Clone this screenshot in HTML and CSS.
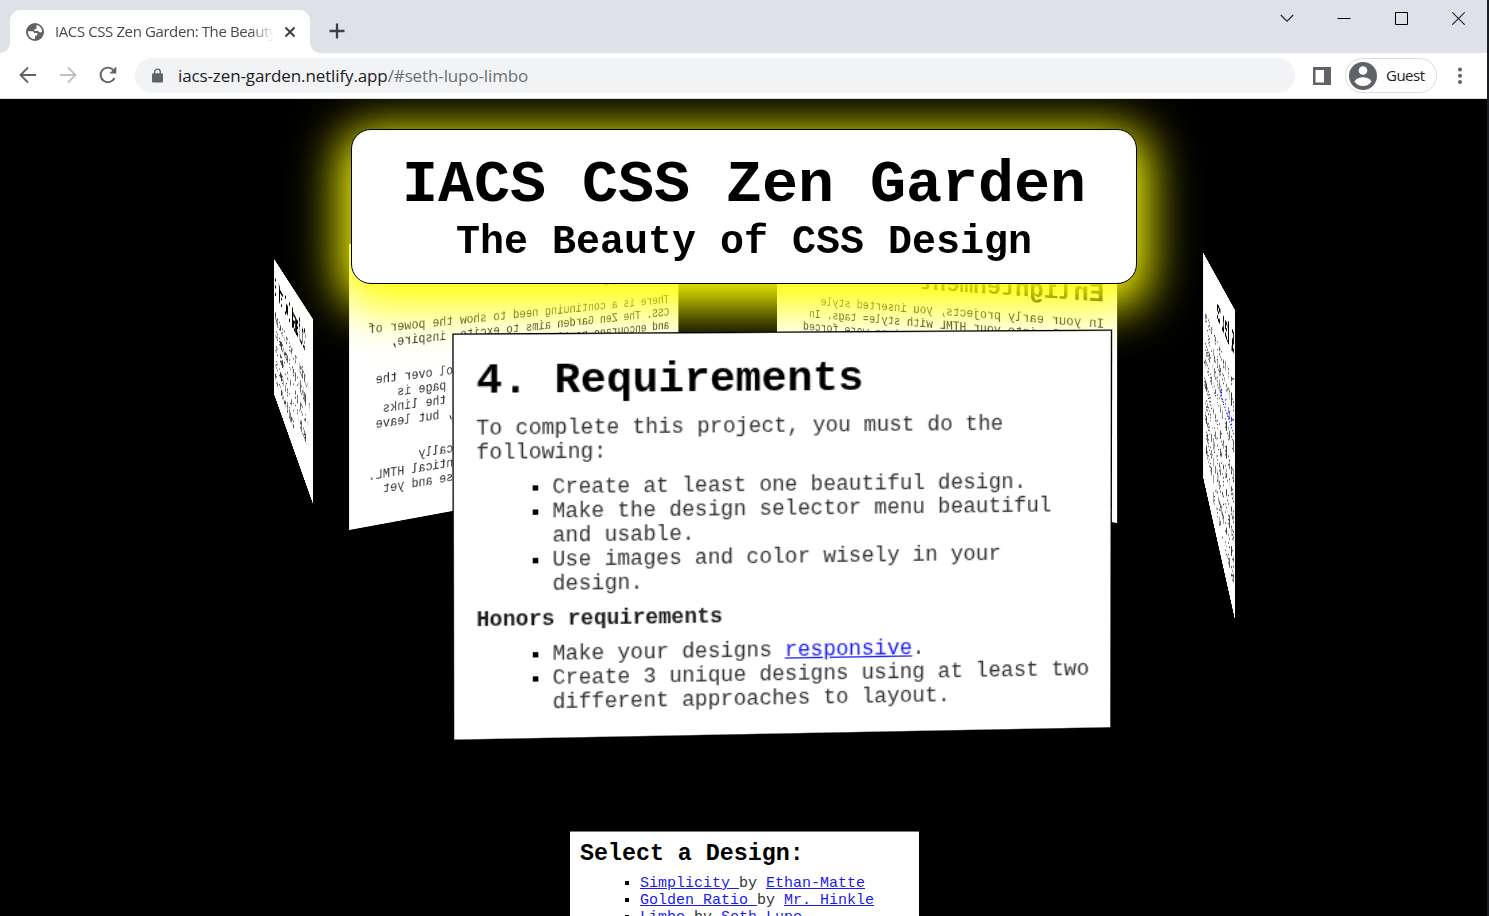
FILE: index.html
```html
<!DOCTYPE html>
<html lang="en">
<head>
<meta charset="utf-8">
<title>IACS CSS Zen Garden: The Beauty of CSS Design</title>
<link rel="stylesheet" href="styles.css">
</head>
<body>
<div class="window">
  <div class="tabstrip">
    <div class="tab">
      <svg class="globe" viewBox="0 0 18 18" width="18" height="18"><circle cx="9" cy="9" r="9" fill="#5f6368"/><path fill="#fff" d="M2 8.200h3.600c1.600 0 2.300.7 2.500 1.700l2.400.2c.9.200 1.200.8 1 1.500-.2.800-.9 1-1.700 1.100l-.8.400v2.900C5.300 16.200 1.600 13 2 8.200zM10.500 2.100c3.300.5 5.400 3.200 5.600 6.300-.9.700-1.500 1.200-2.500.9-.8-.3-.9-1-1.800-1.200l-2.900-.2c-.9-.3-.8-1.300-.1-1.700l1.700-.7z"/></svg>
      <span class="tab-title">IACS CSS Zen Garden: The Beauty of CSS</span>
      <svg class="tab-close" viewBox="0 0 12 12" width="12" height="12"><path d="M1.500 1.500l9 9M10.500 1.500l-9 9" stroke="#3c4043" stroke-width="2" fill="none"/></svg>
    </div>
    <svg class="plus" viewBox="0 0 16 16" width="16" height="16"><path d="M8 .5v15M.5 8h15" stroke="#3c4043" stroke-width="2.300"/></svg>
    <div class="controls">
      <svg width="14" height="14" viewBox="0 0 14 14"><path d="M.8 4l6.200 6.200L13.200 4" fill="none" stroke="#222" stroke-width="1.100"/></svg>
      <svg width="14" height="14" viewBox="0 0 14 14"><path d="M.5 7.500h13" stroke="#000"/></svg>
      <svg width="14" height="14" viewBox="0 0 14 14"><path d="M1.500 1.500h12v12h-12z" fill="none" stroke="#000"/></svg>
      <svg width="14" height="14" viewBox="0 0 14 14"><path d="M1.300 1.300l12.400 12.400M13.700 1.300L1.300 13.700" stroke="#222" stroke-width="1.100"/></svg>
    </div>
  </div>
  <div class="toolbar">
    <svg class="nav" width="18" height="18" viewBox="0 0 18 18"><path d="M17 9H2M9 1.500L1.500 9 9 16.500" fill="none" stroke="#5f6368" stroke-width="1.900"/></svg>
    <svg class="nav" width="18" height="18" viewBox="0 0 18 18"><path d="M1 9h15M9 1.500L16.500 9 9 16.500" fill="none" stroke="#bdc1c6" stroke-width="1.900"/></svg>
    <svg class="nav" width="18" height="18" viewBox="0 0 18 18"><path d="M15.500 12A7.300 7.300 0 1 1 14.300 4" fill="none" stroke="#5f6368" stroke-width="1.900"/><path d="M17.300.6v6.800h-6.800z" fill="#5f6368"/></svg>
    <div class="omnibox">
      <svg width="11" height="15" viewBox="0 0 11 15"><path d="M2.700 6V4a2.800 2.800 0 0 1 5.600 0v2" fill="none" stroke="#5f6368" stroke-width="1.300"/><rect y="5.200" width="11" height="9.300" rx="1.200" fill="#5f6368"/></svg>
      <span class="url">iacs-zen-garden.netlify.app<span class="path">/#seth-lupo-limbo</span></span>
    </div>
    <svg class="panel-icon" width="18" height="18" viewBox="0 0 18 18"><path fill="#5f6368" fill-rule="evenodd" d="M0 0h18v18H0zM2.500 3v12.500H11V3z"/></svg>
    <div class="profile">
      <svg width="28" height="28" viewBox="0 0 28 28"><circle cx="14" cy="14" r="14" fill="#5f6368"/><circle cx="14" cy="8.500" r="4.300" fill="#fff"/><path d="M5.500 19.500c1.500-3 5.200-4.300 8.500-4.300s7 1.300 8.500 4.300c-2 3-5.200 4.500-8.500 4.500s-6.500-1.500-8.500-4.500z" fill="#fff"/></svg>
      <span>Guest</span>
    </div>
    <svg class="dots" width="6" height="18" viewBox="0 0 6 18"><g fill="#5f6368"><circle cx="3" cy="2.500" r="2"/><circle cx="3" cy="8.700" r="2"/><circle cx="3" cy="15" r="2"/></g></svg>
  </div>

  <main class="stage">
    <section class="panel p168" data-quad="274 159 313.300 219.500 313.300 407 274 296">
      <h2>3. What Do I Benefit?</h2>
      <p>Why participate? For recognition, inspiration,<br>and a resource we can all refer to showing how<br>amazing CSS really can be. This project is both<br>inspiration and a learning tool for students<br>who wish to be web designers.</p>
    </section>
    <section class="panel p346 lowered" data-quad="679 123 348.400 144 348.400 432 679 371">
      <h2>2. So What is This<br>About?</h2>
      <p>There is a continuing need to show the power of<br>CSS. The Zen Garden aims to excite, inspire,<br>and encourage participation.</p>
      <p>Every designer will have full control over the<br>look of the design. All HTML on the page is<br>already written. You can still edit the links<br>within the menu to show your design, but leave<br>the rest alone.</p>
      <p>Designs should each look so dramatically<br>different. They would share the identical HTML.<br>Every page gets the same words to use and yet<br>looks unique.</p>
    </section>
    <section class="panel p346 lowered" data-quad="1118 138 776.300 124.500 776.300 368 1118 425">
      <h2>1. The Road to<br>Enlightenment</h2>
      <p>In your early projects, you inserted style<br>directly into your HTML with style= tags. In<br>later projects, your page designs were forced<br>to share a single style sheet.</p>
    </section>
    <section class="panel p270" data-quad="1235.300 210.500 1203 152.500 1203 379 1235.300 523.500">
      <h2>5. Resources</h2>
      <p>There are many sites to learn from, such as <a>W3</a><br>and others which explain layout in detail.<br><a>The Mozilla guides</a> have examples that are good<br>for beginners as well as experienced designers.</p>
      <p>Look at the original garden for ideas about the<br>use of images, type and color in each design.<br>Every page there was made with the same words.<br>Remember to give credit for any picture that<br>you did not create yourself in this project.<br>Ask questions if you need help.</p>
    </section>

    <header class="banner">
      <h1>IACS CSS Zen Garden</h1>
      <div class="subtitle">The Beauty of CSS Design</div>
    </header>

    <section class="panel p302" data-quad="452.300 234.500 1112.200 230.500 1111.500 629.500 452.800 642">
      <h2>4. Requirements</h2>
      <p>To complete this project, you must do the<br>following:</p>
      <ul>
        <li>Create at least one beautiful design.</li>
        <li>Make the design selector menu beautiful<br>and usable.</li>
        <li>Use images and color wisely in your<br>design.</li>
      </ul>
      <h3>Honors requirements</h3>
      <ul>
        <li>Make your designs <a>responsive</a>.</li>
        <li>Create 3 unique designs using at least two<br>different approaches to layout.</li>
      </ul>
    </section>

    <nav class="selector">
      <h3>Select a Design:</h3>
      <ul>
        <li><a>Simplicity </a>by <a>Ethan-Matte</a></li>
        <li><a>Golden Ratio </a>by <a>Mr. Hinkle</a></li>
        <li><a>Limbo </a>by <a>Seth Lupo</a></li>
      </ul>
    </nav>
  </main>
</div>
<div class="edge"></div>
<script src="carousel.js"></script>
</body>
</html>
```
FILE: styles.css
```css
* { box-sizing: border-box; }
body { margin: 0; width: 1489px; height: 916px; overflow: hidden; background: #000; font-family: "Open Sans", sans-serif; }
svg { display: block; flex: none; }
.window { display: flex; flex-direction: column; height: 916px; }

/* browser frame */
.tabstrip { height: 53px; flex: none; background: #dee1e6; display: flex; align-items: flex-start; padding-left: 10px; }
.tab { position: relative; width: 300px; height: 43px; margin-top: 10px; background: #fff; border-radius: 10px 10px 0 0; display: flex; align-items: center; padding: 0 14px 0 16px; }
.tab::before, .tab::after { content: ""; position: absolute; bottom: 0; width: 10px; height: 10px; }
.tab::before { left: -10px; background: radial-gradient(circle at 0 0, #dee1e6 9.5px, #fff 10px); }
.tab::after { right: -10px; background: radial-gradient(circle at 100% 0, #dee1e6 9.5px, #fff 10px); }
.tab-title { width: 220px; margin-left: 11px; padding-bottom: 2px; white-space: nowrap; overflow: hidden; font-size: 15px; letter-spacing: -0.4px; color: #45494d; -webkit-mask-image: linear-gradient(90deg, #000 195px, transparent 219px); mask-image: linear-gradient(90deg, #000 195px, transparent 219px); }
.tab-close { margin-left: 9px; }
.plus { margin: 23px 0 0 19px; }
.controls { margin-left: auto; padding: 11px 24px 0 0; display: flex; gap: 43px; }
.toolbar { height: 46px; flex: none; background: #fff; border-bottom: 1px solid #dadce0; display: flex; align-items: center; padding-left: 19px; }
.nav { margin: 0 22px 1px 0; }
.omnibox { width: 1160px; height: 35px; margin-left: -4px; border-radius: 18px; background: #f1f3f4; display: flex; align-items: center; padding-left: 17px; }
.url { margin-left: 15px; font-size: 17px; letter-spacing: -0.12px; color: #202124; }
.path { color: #6b6f74; }
.panel-icon { margin-left: 18px; }
.profile { width: 92px; height: 35px; margin-left: 14px; border: 1px solid #dadce0; border-radius: 18px; display: flex; align-items: center; padding-left: 3px; font-size: 15px; letter-spacing: -0.5px; color: #202124; }
.profile span { margin: 0 0 2px 9px; }
.dots { margin-left: 20px; }
.edge { position: absolute; right: 0; top: 0; width: 2px; height: 916px; background: #1a1d24; }

/* page */
.stage { position: relative; flex: 1; overflow: hidden; background: #000; font-family: "Courier New", "Liberation Mono", monospace; color: #000; }
.stage a { color: #1a1aee; text-decoration: underline; }
.stage p, .stage li { color: #333; }
.stage li::marker { color: #000; }
.stage ul { list-style: square; }

/* carousel faces, projected by carousel.js */
.panel { position: absolute; left: 0; top: 0; width: 494px; padding: 16px; border: 1px solid #000; background: #fff; transform-origin: 0 0; will-change: transform; font-size: 16px; line-height: 18px; white-space: nowrap; overflow: hidden; }
.p168 { height: 168px; }
.p270 { height: 270px; }
.p302 { height: 302px; padding: 17px 16.5px; }
.p346 { height: 346px; }
.panel h2 { margin: 0 0 8px; font-size: 32px; line-height: 36px; }
.lowered h2 { margin-bottom: 9px; }
.panel h3 { margin: 8px 0; font-size: 16px; line-height: 18px; color: #1c1c1c; }
.panel p { margin: 8px 0; }
.panel ul { margin: 8px 0 8px 16px; padding-left: 40px; }

.banner { position: relative; width: 786px; height: 155px; margin: 30px 0 0 351px; padding-top: 21px; border: 1px solid #000; border-radius: 20px; background: #fff; box-shadow: 0 12px 48px 12px #ff0; text-align: center; font-weight: bold; }
.banner h1 { margin: 0; font-size: 60px; line-height: 68px; }
.subtitle { font-size: 40px; line-height: 47px; }

.selector { position: absolute; left: 570px; top: 732px; width: 349px; height: 100px; padding: 8px 10px; background: #fff; border-top: 1px solid #777; font-size: 15px; line-height: 17px; }
.selector h3 { margin: 0; font-size: 23.3px; line-height: 28px; }
.selector ul { margin: 7px 0 0; padding-left: 60px; }
```
FILE: carousel.js
```js
// Projects each face onto its quad (top-left, top-right, bottom-right, bottom-left).
document.querySelectorAll('.panel').forEach(function (el) {
  var q = el.dataset.quad.split(' ').map(Number);
  var w = el.offsetWidth, h = el.offsetHeight;
  var x0 = q[0], y0 = q[1], x1 = q[2], y1 = q[3], x2 = q[4], y2 = q[5], x3 = q[6], y3 = q[7];
  var dx1 = x1 - x2, dx2 = x3 - x2, sx = x0 - x1 + x2 - x3;
  var dy1 = y1 - y2, dy2 = y3 - y2, sy = y0 - y1 + y2 - y3;
  var det = dx1 * dy2 - dx2 * dy1;
  var g = (sx * dy2 - dx2 * sy) / det, k = (dx1 * sy - sx * dy1) / det;
  var m = [
    (x1 - x0 + g * x1) / w, (y1 - y0 + g * y1) / w, 0, g / w,
    (x3 - x0 + k * x3) / h, (y3 - y0 + k * y3) / h, 0, k / h,
    0, 0, 1, 0,
    x0, y0, 0, 1
  ];
  el.style.transform = 'matrix3d(' + m.map(function (v) { return v.toFixed(9); }).join(',') + ')';
});
```
